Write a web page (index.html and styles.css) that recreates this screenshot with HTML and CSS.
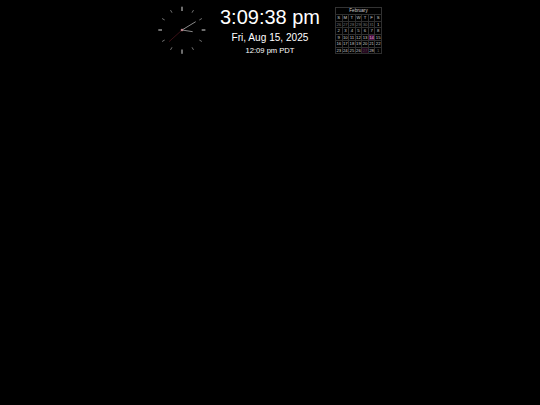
FILE: index.html
```html
<!DOCTYPE html>
<html lang="en">
<head>
<meta charset="utf-8">
<title>Clock</title>
<link rel="stylesheet" href="styles.css">
</head>
<body>
<main class="bar">
  <svg class="clock" width="50" height="50" viewBox="0 0 50 50" aria-label="Analog clock">
    <g stroke="#fff" stroke-width="1" opacity="0.45">
      <path d="M13.500 5.100l1.500 2.600M36.500 5.100l-1.500 2.600M13.500 44.900l1.500-2.600M36.500 44.900l-1.500-2.600"/>
      <path d="M5.100 13.500l2.600 1.500M44.900 13.500l-2.600 1.500M5.100 36.500l2.600-1.500M44.900 36.500l-2.600-1.500"/>
    </g>
    <path d="M25 1.700v4.300M25 44.500v4.300M1.300 25h3.700M44.700 25h3.700" stroke="#fff" stroke-width="1" opacity="0.85"/>
    <path d="M25 25L12 36.700" stroke="#4a141c" stroke-width="0.800"/>
    <path d="M25 25L38.700 16.700" stroke="#8a8a8a" stroke-width="1"/>
    <path d="M25 25L35.700 26.700" stroke="#a8a8a8" stroke-width="0.800"/>
    <circle cx="25" cy="25" r="1.300" fill="#b98088"/>
  </svg>
  <section class="time">
    <div class="now">3:09:38 pm</div>
    <div class="date">Fri, Aug 15, 2025</div>
    <div class="zone">12:09 pm PDT</div>
  </section>
  <table class="cal">
    <caption>February</caption>
    <tr><th>S</th><th>M</th><th>T</th><th>W</th><th>T</th><th>F</th><th>S</th></tr>
    <tr class="dim"><td>26</td><td>27</td><td>28</td><td>29</td><td>30</td><td>31</td><td class="on">1</td></tr>
    <tr><td>2</td><td>3</td><td>4</td><td>5</td><td>6</td><td>7</td><td>8</td></tr>
    <tr><td>9</td><td>10</td><td>11</td><td>12</td><td>13</td><td class="today">14</td><td>15</td></tr>
    <tr><td>16</td><td>17</td><td>18</td><td>19</td><td>20</td><td>21</td><td>22</td></tr>
    <tr><td>23</td><td>24</td><td>25</td><td>26</td><td class="mark">27</td><td>28</td><td class="dimcell">1</td></tr>
  </table>
</main>
</body>
</html>
```
FILE: styles.css
```css
html, body {
  margin: 0;
  height: 100%;
  background: #000;
  color: #fff;
  font-family: "Liberation Sans", Arial, sans-serif;
}
.bar {
  display: flex;
  justify-content: center;
  align-items: flex-start;
  width: 540px;
  padding-top: 5px;
  padding-right: 1px;
  box-sizing: border-box;
}
.clock {
  display: block;
}
.time {
  width: 126px;
  text-align: center;
}
.now {
  font-size: 20px;
  line-height: 24px;
}
.date {
  font-size: 10.100px;
  line-height: 14px;
  margin-top: 2px;
}
.zone {
  font-size: 7.600px;
  line-height: 11px;
}
.cal {
  margin-top: 2px;
  margin-left: 2px;
  border-collapse: collapse;
  table-layout: fixed;
  width: 47px;
  font-size: 4.300px;
  line-height: 5.500px;
  color: #ccc;
}
.cal caption {
  border: 1px solid #333;
  border-bottom: 0;
  font-size: 4.600px;
  line-height: 6px;
  color: #ccc;
}
.cal th, .cal td {
  border: 1px solid #2e2e2e;
  padding: 0;
  text-align: center;
  font-weight: normal;
  height: 5.400px;
}
.cal .dim td { color: #777; }
.cal .dim .on { color: #ccc; }
.cal .today { color: #e0b0d8; background: #4a0c44; }
.cal .mark { color: #444; background: #24061e; }
.cal .dimcell { color: #666; }
```
